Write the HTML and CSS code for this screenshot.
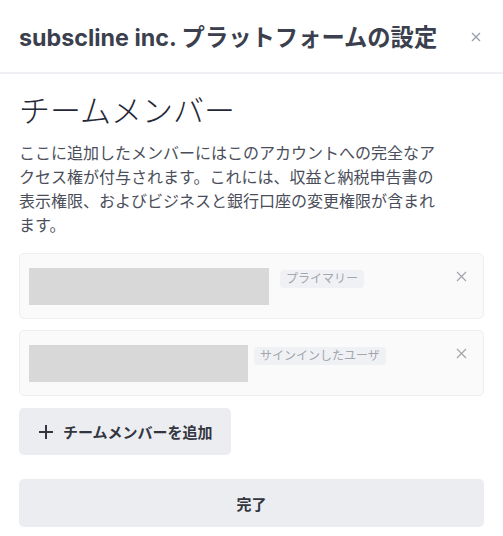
FILE: index.html
```html
<!DOCTYPE html>
<html lang="ja">
<head>
    <meta charset="UTF-8">
    <meta name="viewport" content="width=device-width, initial-scale=1.0">
    <title>チームメンバー</title>
    <link rel="stylesheet" href="styles.css">
</head>
<body>
    <div class="modal">
        <div class="modal-header">
            <h1>subscline inc. プラットフォームの設定</h1>
            <svg class="close" width="10" height="10" viewBox="0 0 10 10"><path d="M1 1L9 9M9 1L1 9" /></svg>
        </div>

        <div class="modal-body">
            <h2>チームメンバー</h2>
            <p class="intro">ここに追加したメンバーにはこのアカウントへの完全なアクセス権が付与されます。これには、収益と納税申告書の表示権限、およびビジネスと銀行口座の変更権限が含まれます。</p>

            <!-- メンバー一覧 -->
            <div class="member">
                <div class="redacted redacted-wide"></div>
                <span class="badge badge-far">プライマリー</span>
                <svg class="member-remove" width="11" height="11" viewBox="0 0 11 11"><path d="M1 1L10 10M10 1L1 10" /></svg>
            </div>
            <div class="member">
                <div class="redacted redacted-narrow"></div>
                <span class="badge badge-near">サインインしたユーザ</span>
                <svg class="member-remove" width="11" height="11" viewBox="0 0 11 11"><path d="M1 1L10 10M10 1L1 10" /></svg>
            </div>

            <button class="add-button">
                <svg class="plus" width="14" height="14" viewBox="0 0 14 14"><path d="M7 0V14M0 7H14" /></svg>
                チームメンバーを追加
            </button>
            <button class="done-button">完了</button>
        </div>
    </div>
</body>
</html>
```

FILE: styles.css
```css
body {
    font-family: Inter, 'Noto Sans CJK JP', sans-serif;
    margin: 0;
    padding: 0;
    background-color: #fff;
    color: #3b3f4e;
}

.modal {
    width: 503px;
}

.modal-header {
    height: 72px;
    padding: 0 19px;
    display: flex;
    align-items: center;
    justify-content: space-between;
    border-bottom: 2px solid #f0f0f4;
}

h1 {
    margin: 0;
    font-size: 23.3px;
    font-weight: 700;
    color: #3b3f4e;
}

.close {
    margin-right: 3px;
    margin-top: 2px;
    stroke: #9aa0ae;
    stroke-width: 1.4;
}

.modal-body {
    padding: 0 19px;
}

h2 {
    margin: 19px 0 0;
    font-size: 31px;
    line-height: 36px;
    font-weight: 300;
    color: #242837;
}

.intro {
    margin: 12px 0 16px;
    max-width: 424px;
    font-size: 16px;
    line-height: 24px;
    color: #4a4e5a;
}

/* Tarjetas de miembros */
.member {
    display: flex;
    align-items: flex-start;
    padding: 14px 16px 13px 9px;
    margin-bottom: 11px;
    background-color: #fafafa;
    border: 1px solid #efefef;
    border-radius: 5px;
}

.redacted {
    height: 37px;
    background-color: #d8d8d8;
}

.redacted-wide {
    width: 240px;
}

.redacted-narrow {
    width: 219px;
}

.badge {
    margin-top: 2px;
    padding: 0 6px;
    height: 18px;
    line-height: 18px;
    font-size: 12px;
    color: #a3a6ae;
    background-color: #f0f1f4;
    border-radius: 4px;
}

.badge-far {
    margin-left: 11px;
}

.badge-near {
    margin-left: 6px;
}

.member-remove {
    margin-left: auto;
    margin-top: 3px;
    stroke: #a4a4aa;
    stroke-width: 1.2;
}

button {
    font-family: inherit;
    border: none;
    border-radius: 5px;
    background-color: #ecedf1;
    color: #33363f;
    font-weight: 700;
    cursor: pointer;
}

.add-button {
    display: flex;
    align-items: center;
    margin-top: 12px;
    width: 212px;
    height: 47px;
    padding: 0 0 0 20px;
    font-size: 15px;
}

.plus {
    margin-right: 10px;
    stroke: #33363f;
    stroke-width: 2;
}

.done-button {
    display: block;
    margin-top: 24px;
    width: 100%;
    height: 48px;
    font-size: 15px;
}
```
